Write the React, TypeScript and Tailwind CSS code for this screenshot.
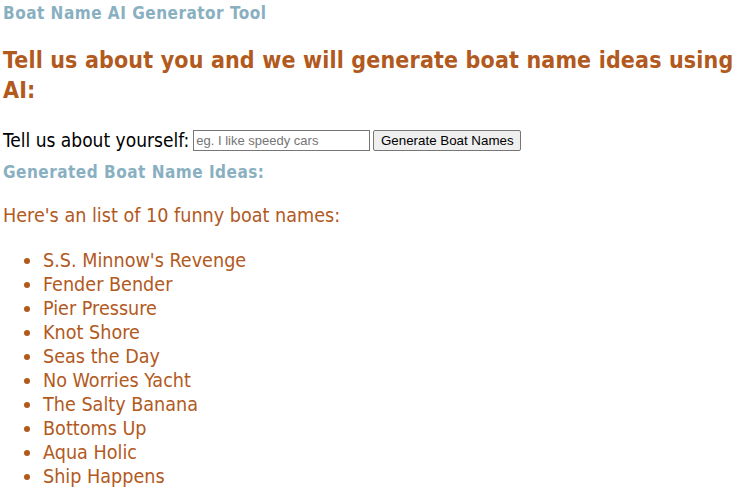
import React from "react";

const names = [
  "S.S. Minnow's Revenge",
  "Fender Bender",
  "Pier Pressure",
  "Knot Shore",
  "Seas the Day",
  "No Worries Yacht",
  "The Salty Banana",
  "Bottoms Up",
  "Aqua Holic",
  "Ship Happens",
];

export default function App() {
  return (
    <div
      className="min-h-[499px] bg-white px-[3px] pt-[3px]"
      style={{ fontFamily: '"DejaVu Sans Condensed", "DejaVu Sans", sans-serif' }}
    >
      <div className="text-[17px] leading-[20px] font-bold tracking-[0.5px] text-[#89b0c1]">
        Boat Name AI Generator Tool
      </div>
      <h2 className="mt-[22px] text-[23px] leading-[30px] font-bold tracking-[0.15px] text-[#b25a1e]">
        Tell us about you and we will generate boat name ideas using
        <br />
        AI:
      </h2>
      <div className="mt-[23px] flex items-center h-[24px]">
        <span className="text-[19px] leading-[24px] text-black">Tell us about yourself:</span>
        <input
          type="text"
          placeholder="eg. I like speedy cars"
          className="ml-[4px] w-[177px] h-[21px] border border-[#767676] px-[2px] text-[13px] placeholder:text-[#757575] outline-none"
          style={{ fontFamily: '"Liberation Sans", Arial, sans-serif' }}
        />
        <button
          className="ml-[3px] h-[21px] w-[148px] border border-[#767676] bg-[#efefef] rounded-[2px] text-[13.33px] text-black"
          style={{ fontFamily: '"Liberation Sans", Arial, sans-serif' }}
        >
          Generate Boat Names
        </button>
      </div>
      <div className="mt-[10px] text-[17px] leading-[20px] font-bold tracking-[0.5px] text-[#89b0c1]">
        Generated Boat Name Ideas:
      </div>
      <p className="mt-[23px] text-[19.6px] leading-[22px] text-[#b25a1e]">
        Here's an list of 10 funny boat names:
      </p>
      <ul className="mt-[22px] list-disc pl-[40px] text-[19.6px] leading-[24px] text-[#b25a1e]">
        {names.map((n) => (
          <li key={n}>{n}</li>
        ))}
      </ul>
    </div>
  );
}
